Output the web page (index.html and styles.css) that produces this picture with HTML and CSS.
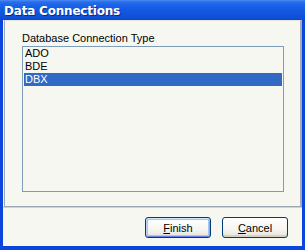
FILE: index.html
```html
<!DOCTYPE html>
<html>
<head>
<meta charset="utf-8">
<title>Data Connections</title>
<link rel="stylesheet" href="styles.css">
</head>
<body>
<div class="window">
  <div class="titlebar"><span class="title">Data Connections</span></div>
  <div class="client">
    <div class="panel">
      <div class="label">Database Connection Type</div>
      <div class="list">
        <div class="item">ADO</div>
        <div class="item">BDE</div>
        <div class="item selected">DBX</div>
      </div>
    </div>
    <div class="footer">
      <button class="btn default"><u>F</u>inish</button>
      <button class="btn"><u>C</u>ancel</button>
    </div>
  </div>
</div>
</body>
</html>
```
FILE: styles.css
```css
html, body {
  margin: 0;
  padding: 0;
}
body {
  width: 305px;
  height: 250px;
  overflow: hidden;
  font-family: "Liberation Sans", Arial, sans-serif;
  font-size: 11px;
  color: #000;
}
.window {
  width: 305px;
  height: 250px;
  display: flex;
  flex-direction: column;
  background: #0A45DD;
  box-sizing: border-box;
}
.titlebar {
  height: 20px;
  flex: none;
  background: linear-gradient(#4A8CF5 0, #2A6CEB 2px, #1860E6 6px, #1257DE 12px, #0D4FD6 18px, #0A48CC 20px);
  display: flex;
  align-items: center;
  padding-left: 4px;
}
.title {
  color: #fff;
  font-family: "DejaVu Sans", sans-serif;
  font-weight: bold;
  font-size: 12px;
  letter-spacing: -0.2px;
  text-shadow: 1px 1px 0 #0A2A8A;
  margin-top: 1px;
}
.client {
  flex: 1;
  margin: 0 3px 4px 3px;
  background: #F7F7F2;
  display: flex;
  flex-direction: column;
}
.panel {
  margin-left: 1px;
  height: 187px;
  box-sizing: border-box;
  border-top: 1px solid #E4E4DE;
  border-left: 1px solid #9DA7B3;
  border-right: 2px solid #A3ABB4;
  border-bottom: 1px solid #9DA7B3;
  padding: 11px 16px 0 17px;
}
.label {
  height: 13px;
  line-height: 13px;
  margin-bottom: 1px;
}
.list {
  height: 146px;
  box-sizing: border-box;
  border: 1px solid #7F9DB9;
  background: #F7F7F2;
  padding: 0 1px;
}
.item {
  height: 13px;
  line-height: 13px;
  padding-left: 1px;
}
.item.selected {
  background: #316AC5;
  color: #fff;
}
.footer {
  flex: 1;
  border-top: 1px solid #D9D3BC;
  display: flex;
  justify-content: flex-end;
  align-items: flex-start;
  gap: 11px;
  padding: 9px 14px 0 0;
}
.btn {
  width: 66px;
  height: 21px;
  padding: 0;
  font-family: "Liberation Sans", Arial, sans-serif;
  font-size: 11px;
  color: #000;
  border: 1px solid #003C74;
  border-radius: 3px;
  background: linear-gradient(#FFFFFF 0, #F6F5F0 60%, #E6E3D8 100%);
  box-shadow: inset 0 -2px 0 #D6D0C5;
}
.btn.default {
  box-shadow: inset 0 1px 0 #CEE7FF, inset 1px 0 0 #BCD4F6, inset -1px 0 0 #89ADE4, inset 0 -1px 0 #6982EE, inset 0 0 0 2px #A9C3F2;
}
.btn u {
  text-decoration: underline;
}
```
